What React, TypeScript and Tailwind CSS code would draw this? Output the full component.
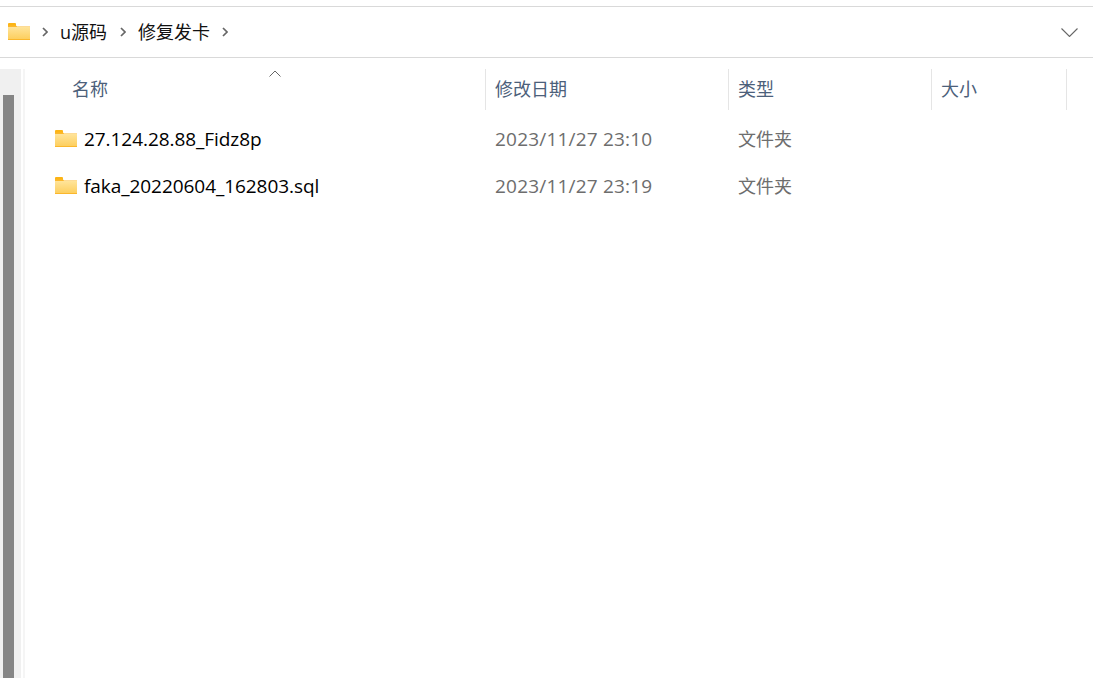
const font = { fontFamily: '"Open Sans", "Noto Sans CJK SC", sans-serif' }

function FolderIcon({ className }: { className?: string }) {
  return (
    <svg className={className} viewBox="0 0 22 17" width="22" height="17">
      <path d="M0 1a1 1 0 0 1 1-1h6a1 1 0 0 1 1 1v2H0z" fill="#fcb415" />
      <path d="M0 2.5h8L9 3.5h13V17H0z" fill="#fbb72c" />
      <rect x="0" y="4" width="22" height="12" fill="url(#folderFill)" />
      <defs>
        <linearGradient id="folderFill" x1="0" y1="0" x2="0" y2="1">
          <stop offset="0" stopColor="#ffe49a" />
          <stop offset="1" stopColor="#fdcf5f" />
        </linearGradient>
      </defs>
    </svg>
  )
}

function Crumb({ className }: { className?: string }) {
  return (
    <svg className={className} viewBox="0 0 6 10" width="6" height="10" fill="none">
      <path d="M1 1l4 4-4 4" stroke="#666" strokeWidth="1.7" />
    </svg>
  )
}

const rows = [
  { name: '27.124.28.88_Fidz8p', date: '2023/11/27 23:10' },
  { name: 'faka_20220604_162803.sql', date: '2023/11/27 23:19' },
]

export default function App() {
  return (
    <div className="h-[678px] w-[1093px] overflow-hidden bg-white flex flex-col pt-[6px] text-[18px]" style={font}>
      {/* Address bar */}
      <div className="h-[52px] shrink-0 border-y border-[#d9d9d9] flex items-center pl-[8px] pr-[15px] text-[#111]">
        <FolderIcon className="mb-[1px]" />
        <Crumb className="ml-[12px]" />
        <span className="ml-[12px] leading-none">u源码</span>
        <Crumb className="ml-[13px]" />
        <span className="ml-[12px] leading-none">修复发卡</span>
        <Crumb className="ml-[12px]" />
        <svg className="ml-auto" viewBox="0 0 17 9" width="17" height="9" fill="none">
          <path d="M0.5 0.5l8 8 8-8" stroke="#666" strokeWidth="1.1" />
        </svg>
      </div>

      <div className="flex flex-1 pt-[11px] min-h-0">
        {/* Scrollbar */}
        <div className="w-[21px] shrink-0 bg-[#f0f0f0] pl-[3px] pt-[26px]">
          <div className="w-[11px] h-full bg-[#858585]" />
        </div>
        <div className="w-[2px] shrink-0 bg-white" />
        <div className="w-[2px] shrink-0 bg-[#f5f5f5]" />

        {/* File list */}
        <div className="flex-1 min-w-0">
          <div className="relative flex h-[41px] text-[#4c607a]">
            <svg className="absolute left-[244px] top-[1px]" viewBox="0 0 12 7" width="12" height="7" fill="none">
              <path d="M0.5 6.5l5.5-5.5 5.5 5.5" stroke="#666" strokeWidth="1" />
            </svg>
            <div className="w-[460px] pl-[47px] pt-[7px]">名称</div>
            <div className="w-[243px] pl-[9px] pt-[7px] border-l border-[#e5e5e5]">修改日期</div>
            <div className="w-[203px] pl-[9px] pt-[7px] border-l border-[#e5e5e5]">类型</div>
            <div className="w-[136px] pl-[9px] pt-[7px] border-x border-[#e5e5e5]">大小</div>
          </div>
          <div className="pt-[6px]">
            {rows.map((row) => (
              <div key={row.name} className="flex h-[47px] items-center">
                <div className="w-[460px] pl-[30px] flex items-center gap-[7px] text-black">
                  <FolderIcon className="mb-[2px]" />
                  <span className="text-[19px] tracking-[-0.06px]">{row.name}</span>
                </div>
                <div className="w-[243px] pl-[10px] text-[19px] tracking-[0.2px] text-[#6d6d6d]">{row.date}</div>
                <div className="pl-[10px] text-[#6d6d6d]">文件夹</div>
              </div>
            ))}
          </div>
        </div>
      </div>
    </div>
  )
}
